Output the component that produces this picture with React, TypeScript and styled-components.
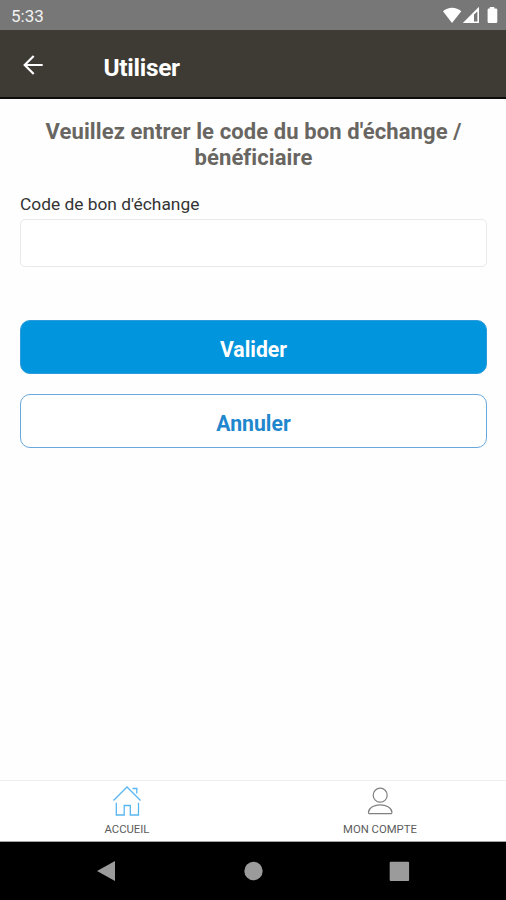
import React from "react";
import styled, { createGlobalStyle } from "styled-components";

const GlobalStyle = createGlobalStyle`
  * { box-sizing: border-box; }
  body { margin: 0; background: #fefefe; font-family: Roboto, sans-serif; }
`;

const Screen = styled.div`
  display: flex;
  flex-direction: column;
  width: 506px;
  height: 900px;
  overflow: hidden;
  background: #fefefe;
`;

const StatusBar = styled.div`
  display: flex;
  align-items: center;
  justify-content: space-between;
  flex: none;
  height: 30px;
  padding: 2px 7px 0 11px;
  background: #777777;
  color: #f2f2f2;
  font-size: 17px;
  line-height: 20px;
`;

const StatusIcons = styled.svg`
  display: block;
  width: 58px;
  height: 20px;
`;

const Header = styled.header`
  display: flex;
  align-items: center;
  flex: none;
  height: 69px;
  padding: 2px 20px 0;
  border-bottom: 2px solid #0d0c0a;
  background: #3e3a34;
`;

const BackButton = styled.button`
  display: flex;
  width: 26px;
  height: 26px;
  padding: 0;
  margin: 0 57.5px 0 0;
  border: 0;
  background: none;
`;

const Title = styled.h1`
  margin: 6px 0 0;
  color: #ffffff;
  font-size: 24.5px;
  font-weight: 700;
  line-height: 30px;
  letter-spacing: -0.3px;
`;

const Content = styled.main`
  display: flex;
  flex-direction: column;
  flex: 1;
  padding: 20px 19px 0 20px;
`;

const Prompt = styled.h2`
  margin: 0;
  color: #696662;
  font-size: 22px;
  font-weight: 700;
  line-height: 26px;
  letter-spacing: 0.1px;
  text-align: center;
`;

const Field = styled.label`
  display: flex;
  flex-direction: column;
  gap: 4px;
  margin: 22px 0 53px;
  color: #333333;
  font-size: 17.35px;
  line-height: 22px;
`;

const CodeInput = styled.input`
  width: 100%;
  height: 48px;
  padding: 0 12px;
  border: 1px solid #e9e9e9;
  border-radius: 5px;
  background: #ffffff;
  font: inherit;
`;

const Actions = styled.div`
  display: flex;
  flex-direction: column;
  gap: 20px;
`;

const ActionButton = styled.button<{ $primary?: boolean }>`
  height: 54px;
  padding: 6px 0 0;
  border: 1px solid ${(p) => (p.$primary ? "#2b9bdc" : "#67a8dd")};
  border-radius: 10px;
  background: ${(p) => (p.$primary ? "#0095dc" : "#ffffff")};
  color: ${(p) => (p.$primary ? "#ffffff" : "#1f87cd")};
  font-family: inherit;
  font-size: 21.2px;
  font-weight: 700;
  line-height: 26px;
`;

const TabBar = styled.nav`
  display: grid;
  grid-template-columns: 1fr 1fr;
  flex: none;
  height: 62px;
  border-top: 1px solid #eeeeee;
  border-bottom: 1px solid #a5a5a5;
  background: #ffffff;
`;

const Tab = styled.a`
  display: flex;
  flex-direction: column;
  align-items: center;
  padding: 3px 0 0 1px;
  color: #5c5c5c;
  font-size: 11.3px;
  line-height: 14px;
`;

const TabIcon = styled.svg`
  width: 34px;
  height: 34px;
  margin-bottom: 5px;
  fill: none;
`;

const SystemNav = styled.div`
  display: flex;
  align-items: center;
  justify-content: space-between;
  flex: none;
  height: 58px;
  padding: 0 95px;
  background: #000000;
`;

const NavIcon = styled.svg`
  width: 24px;
  height: 24px;
  fill: #9b9b9b;
`;

export default function App() {
  return (
    <Screen>
      <GlobalStyle />
      <StatusBar>
        <span>5:33</span>
        <StatusIcons viewBox="0 0 58 20" fill="#ffffff">
          <path d="M2 5.3C7 0.4 15.3 0.4 20.3 5.3L11 17Z" />
          <path fillRule="evenodd" d="M21.8 17L38 0.8V17ZM33 8.6V15.5H36.4V5.6Z" />
          <path d="M48.8 0.9H53.3V2.6H55Q56.3 2.6 56.3 3.9V15.7Q56.3 17 55 17H47.9Q46.6 17 46.6 15.7V3.9Q46.6 2.6 47.9 2.6H48.8Z" />
        </StatusIcons>
      </StatusBar>
      <Header>
        <BackButton aria-label="Retour">
          <svg width="26" height="26" viewBox="0 0 26 26" fill="none" stroke="#ffffff" strokeWidth="2.2">
            <path d="M22.7 13H5M13.7 4L4.7 13L13.7 22" />
          </svg>
        </BackButton>
        <Title>Utiliser</Title>
      </Header>
      <Content>
        <Prompt>
          Veuillez entrer le code du bon d'échange /<br />
          bénéficiaire
        </Prompt>
        <Field>
          Code de bon d'échange
          <CodeInput />
        </Field>
        <Actions>
          <ActionButton $primary>Valider</ActionButton>
          <ActionButton>Annuler</ActionButton>
        </Actions>
      </Content>
      <TabBar>
        <Tab>
          <TabIcon viewBox="0 0 34 34" stroke="#58b6f2" strokeWidth="1.3">
            <path d="M3.5 16.5L17 3L30.5 16.5M22.5 4.5H26.8V9.5M6.3 18.8V31H14.2V21.5H20.3V31H28.5V18.8" />
          </TabIcon>
          ACCUEIL
        </Tab>
        <Tab>
          <TabIcon viewBox="0 0 34 34" stroke="#808080" strokeWidth="1.2">
            <circle cx="17.2" cy="11.2" r="7" />
            <path d="M6.9 29.7H27.5Q29.1 29.7 28.9 28.1C28.2 18.5 6.2 18.5 5.5 28.1Q5.3 29.7 6.9 29.7Z" />
          </TabIcon>
          MON COMPTE
        </Tab>
      </TabBar>
      <SystemNav>
        <NavIcon viewBox="0 0 24 24">
          <path d="M2 12L20 2V22Z" />
        </NavIcon>
        <NavIcon viewBox="0 0 24 24">
          <circle cx="12.5" cy="12" r="9.2" />
        </NavIcon>
        <NavIcon viewBox="0 0 24 24">
          <rect x="2.7" y="2.7" width="19.4" height="19.4" rx="1" />
        </NavIcon>
      </SystemNav>
    </Screen>
  );
}
